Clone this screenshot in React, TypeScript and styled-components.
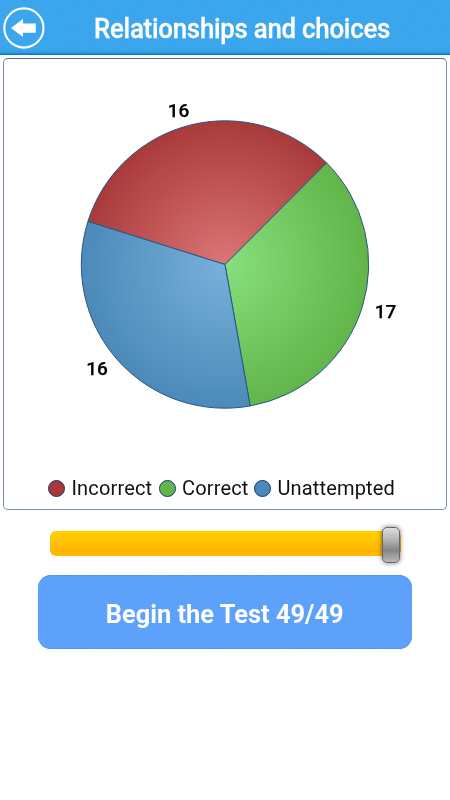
import React from "react";
import styled, { createGlobalStyle } from "styled-components";

const GlobalStyle = createGlobalStyle`
  * { box-sizing: border-box; }
  body { margin: 0; background: #fff; }
`;

const Screen = styled.main`
  display: flex;
  flex-direction: column;
  width: 450px;
  height: 800px;
  background: #fff;
  font-family: Roboto, "Liberation Sans", sans-serif;
  overflow: hidden;
`;

const Header = styled.header`
  position: relative;
  display: flex;
  align-items: center;
  flex: none;
  height: 55px;
  padding: 0 0 0 3px;
  background: linear-gradient(#38a2ed 0, #38a2ed 50px, #2d95e0 53px, #0878bd 54px, #0878bd 55px);
`;

const Grain = styled.svg`
  position: absolute;
  inset: 0;
  width: 100%;
  height: 100%;
  opacity: 0.09;
  mix-blend-mode: overlay;
  pointer-events: none;
`;

const BackButton = styled.button`
  position: relative;
  display: flex;
  width: 42px;
  height: 42px;
  padding: 0;
  border: 0;
  background: none;
`;

const Title = styled.h1`
  flex: none;
  margin: 2px 0 0 49px;
  color: #fff;
  font-size: 27px;
  font-weight: 500;
  line-height: 32px;
  letter-spacing: -0.25px;
  white-space: nowrap;
  transform: scaleX(0.956);
  transform-origin: left center;
  -webkit-text-stroke: 0.3px #fff;
`;

const Card = styled.section`
  display: flex;
  flex-direction: column;
  flex: none;
  width: 444px;
  height: 452px;
  margin: 3px 3px 0;
  border: 1px solid #7890b4;
  border-top-color: #4f6c96;
  border-radius: 5px;
`;

const Chart = styled.svg`
  display: block;
  width: 442px;
  height: 410px;
  font: 500 19px Roboto, "Liberation Sans", sans-serif;
`;

const Legend = styled.ul`
  display: flex;
  align-items: center;
  height: 38px;
  margin: 0;
  padding: 0 0 0 44px;
  list-style: none;
`;

const LegendItem = styled.li<{ $width: number }>`
  display: flex;
  align-items: center;
  gap: 6.5px;
  width: ${({ $width }) => $width}px;
  color: #111;
  font-size: 20px;
  line-height: 24px;
  letter-spacing: 0.15px;
  white-space: nowrap;
`;

const Dot = styled.span<{ $color: string }>`
  flex: none;
  width: 17px;
  height: 17px;
  border: 1.5px solid #123a76;
  border-radius: 50%;
  background: ${({ $color }) => $color};
`;

const Slider = styled.div`
  display: flex;
  align-items: center;
  justify-content: flex-end;
  flex: none;
  width: 351px;
  height: 25px;
  margin: 21px 0 1px 50px;
  border-radius: 6px;
  background: linear-gradient(#ffd000, #ffc400 45%, #ffb300 78%, #ffbd00);
`;

const Thumb = styled.div`
  width: 18px;
  height: 36px;
  margin: 2px 1px 0 0;
  border: 1.5px solid #666;
  border-radius: 5px;
  background: linear-gradient(#dedede 0, #b4b4b4 35%, #858585 65%, #b9b9b9 100%);
  box-shadow: 0 0 5px rgba(0, 0, 0, 0.55);
`;

const StartButton = styled.button`
  position: relative;
  display: flex;
  align-items: center;
  justify-content: center;
  flex: none;
  width: 374px;
  height: 74px;
  margin: 18px 0 0 38px;
  padding: 3px 0 0;
  border: 0;
  border-radius: 13px;
  background: #599dfb;
  box-shadow: inset 0 1px #4894f4, inset 0 -1px #4894f4;
  color: #fff;
  font: 700 26px/32px Roboto, "Liberation Sans", sans-serif;
  white-space: nowrap;
  overflow: hidden;
`;

const ButtonLabel = styled.span`
  transform: scaleX(0.977);
`;

const CX = 221;
const CY = 205.5;
const R = 143.7;

const slices = [
  { name: "Incorrect", value: 16, inner: "#dc7676", outer: "#a93a3a", dot: "#a93838", x: 174.5, y: 57.5, width: 110.5 },
  { name: "Correct", value: 17, inner: "#88df7c", outer: "#62b54a", dot: "#62b54a", x: 381.5, y: 258.5, width: 95.5 },
  { name: "Unattempted", value: 16, inner: "#78b1da", outer: "#4b8ab9", dot: "#4a88b8", x: 93, y: 315.5, width: 160 },
];

const total = slices.reduce((sum, s) => sum + s.value, 0);

const point = (deg: number) => {
  const a = (deg * Math.PI) / 180;
  return `${(CX + R * Math.cos(a)).toFixed(2)} ${(CY + R * Math.sin(a)).toFixed(2)}`;
};

const arcs = slices.map((s, i) => {
  const before = slices.slice(0, i).reduce((sum, p) => sum + p.value, 0);
  const start = -162.55 + (before / total) * 360;
  const end = start + (s.value / total) * 360;
  return { ...s, d: `M${CX} ${CY}L${point(start)}A${R} ${R} 0 0 1 ${point(end)}Z` };
});

const Texture = ({ id }: { id: string }) => (
  <Grain aria-hidden>
    <filter id={id}>
      <feTurbulence type="fractalNoise" baseFrequency="0.55" numOctaves="2" />
      <feColorMatrix values="1 0 0 0 0  1 0 0 0 0  1 0 0 0 0  0 0 0 0 1" />
    </filter>
    <rect width="100%" height="100%" filter={`url(#${id})`} />
  </Grain>
);

export default function App() {
  return (
    <Screen>
      <GlobalStyle />
      <Header>
        <Texture id="header-grain" />
        <BackButton aria-label="Back">
          <svg width="42" height="42" viewBox="0 0 42 42">
            <circle cx="20.9" cy="21" r="19.6" fill="none" stroke="#fff" strokeWidth="2.1" />
            <path d="M8 21L20 12V16.5H32.8V25.7H20V30Z" fill="#fff" />
          </svg>
        </BackButton>
        <Title>Relationships and choices</Title>
      </Header>
      <Card>
        <Chart viewBox="0 0 442 410">
          <defs>
            {arcs.map((s) => (
              <radialGradient key={s.name} id={s.name} gradientUnits="userSpaceOnUse" cx={CX} cy={CY} r={R}>
                <stop offset="0" stopColor={s.inner} />
                <stop offset="1" stopColor={s.outer} />
              </radialGradient>
            ))}
          </defs>
          {arcs.map((s) => (
            <path key={s.name} d={s.d} fill={`url(#${s.name})`} stroke="#2b5588" strokeWidth="1" strokeLinejoin="round" />
          ))}
          {arcs.map((s) => (
            <text key={s.name} x={s.x} y={s.y} textAnchor="middle" fill="#000" stroke="#000" strokeWidth="0.25">{s.value}</text>
          ))}
        </Chart>
        <Legend>
          {slices.map((s) => (
            <LegendItem key={s.name} $width={s.width}>
              <Dot $color={s.dot} />
              {s.name}
            </LegendItem>
          ))}
        </Legend>
      </Card>
      <Slider>
        <Thumb />
      </Slider>
      <StartButton>
        <Texture id="button-grain" />
        <ButtonLabel>Begin the Test 49/49</ButtonLabel>
      </StartButton>
    </Screen>
  );
}
